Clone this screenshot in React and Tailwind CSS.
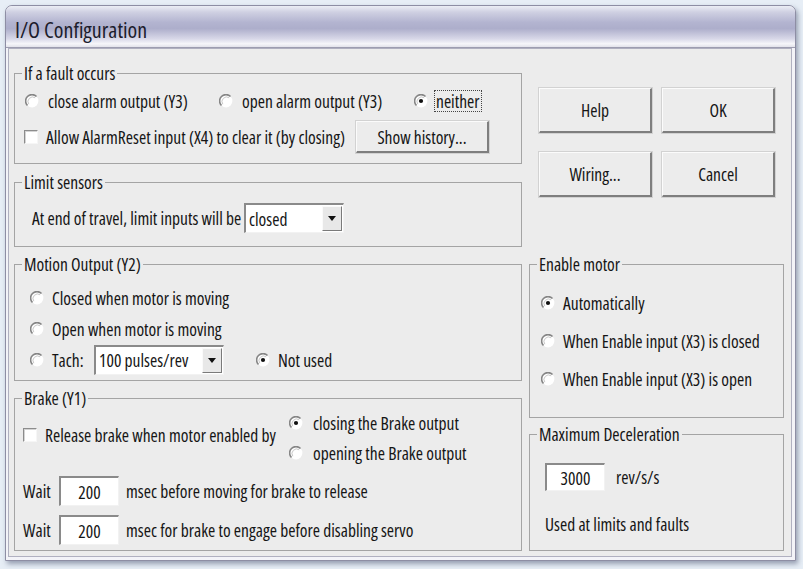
import React from "react";

function Radio({ checked, label, focus, gap = "gap-[9px]" }) {
  return (
    <div className={"flex items-center " + gap}>
      <svg width="14" height="14" viewBox="0 0 14 14" className="shrink-0">
        <circle cx="7" cy="7" r="6.4" fill="#ffffff" />
        <path d="M2.47 11.53 A6.4 6.4 0 0 1 11.53 2.47" stroke="#868686" strokeWidth="1.6" fill="none" />
        <path d="M3.8 10.2 A4.6 4.6 0 0 1 10.2 3.8" stroke="#c8c8c8" strokeWidth="1" fill="none" />
        {checked && <circle cx="7" cy="7" r="2.1" fill="#111111" />}
      </svg>
      {focus ? (
        <span className="border border-dotted border-[#444] px-[1px] leading-[20px]">{label}</span>
      ) : (
        <span className="leading-[20px] whitespace-nowrap">{label}</span>
      )}
    </div>
  );
}

function Check({ label }) {
  return (
    <div className="flex items-center gap-[8px]">
      <span className="w-[14px] h-[14px] shrink-0 bg-white border border-t-[#8c8c8c] border-l-[#8c8c8c] border-r-[#f6f6f6] border-b-[#f6f6f6] shadow-[inset_1px_1px_0_#d4d4d4]" />
      <span className="leading-[20px] whitespace-nowrap">{label}</span>
    </div>
  );
}

function Btn({ children, className = "" }) {
  return (
    <div
      className={
        "flex items-center justify-center bg-[#ececec] border-t border-l border-t-[#fbfbfb] border-l-[#fbfbfb] border-r-2 border-b-2 border-r-[#7e7e7e] border-b-[#7e7e7e] shadow-[0_0_0_1px_#d2d2d2] leading-[20px] " +
        className
      }
    >
      {children}
    </div>
  );
}

function Combo({ value, className = "" }) {
  return (
    <div
      className={
        "flex items-center bg-white border-t-2 border-l-2 border-t-[#8a8a8a] border-l-[#8a8a8a] border-b border-r border-b-[#f2f2f2] border-r-[#f2f2f2] " +
        className
      }
    >
      <span className="flex-1 pl-[3px] leading-[20px] whitespace-nowrap">{value}</span>
      <div className="w-[20px] h-[25px] mr-[1px] flex items-center justify-center bg-[#e8e8e8] border-t border-l border-t-[#fafafa] border-l-[#fafafa] border-r border-b border-r-[#7a7a7a] border-b-[#7a7a7a]">
        <svg width="8" height="5" viewBox="0 0 8 5">
          <path d="M0 0 H8 L4 5 Z" fill="#111" />
        </svg>
      </div>
    </div>
  );
}

function Field({ value, className = "" }) {
  return (
    <div
      className={
        "flex items-center justify-center bg-white border-t-2 border-l-2 border-t-[#8a8a8a] border-l-[#8a8a8a] border-b border-r border-b-[#f2f2f2] border-r-[#f2f2f2] leading-[20px] " +
        className
      }
    >
      {value}
    </div>
  );
}

function Group({ label, className = "", children }) {
  return (
    <fieldset className={"border border-[#a4a4a4] min-w-0 " + className}>
      <legend className="ml-[7px] px-[2px] leading-[20px]">{label}</legend>
      {children}
    </fieldset>
  );
}

export default function App() {
  return (
    <div className="w-[803px] h-[569px] overflow-hidden bg-[#e7eef6] pt-[5px] pl-[5px] font-['Open_Sans',sans-serif] font-stretch-[75%] font-[370] text-[17.5px] text-[#151515]">
      <div className="w-[791px] h-[556px] flex flex-col rounded-t-[7px] border border-[#8e8ea4] bg-[#f3f3f8] shadow-[2px_3px_5px_rgba(70,80,110,0.5)] overflow-hidden">
        <div className="h-[41px] shrink-0 pl-[9px] pt-[12px] rounded-t-[6px] bg-[linear-gradient(to_bottom,#eceef5_0%,#cfd0e2_15%,#b3b4d0_40%,#adaecb_55%,#d8d8e8_80%,#f6f6fa_92%,#e2e2ea_100%)]">
          <span className="text-[22px] leading-[22px] font-medium text-[#1c1c2c]">I/O Configuration</span>
        </div>
        <div className="h-px shrink-0 bg-[#9d9db0]" />
        <div className="ml-[2px] mr-[3px] mb-[3px] flex-1 bg-[#ececec] border border-[#b0b0c0] pt-[14px] pl-[5px] flex gap-[7px]">
          {/* Left column */}
          <div className="w-[508px] flex flex-col">
            <Group label="If a fault occurs" className="h-[101px]">
              <div className="pl-[10px] pt-[6px]">
                <div className="flex h-[24px] items-center">
                  <div className="w-[194px]">
                    <Radio label="close alarm output (Y3)" />
                  </div>
                  <div className="w-[195px]">
                    <Radio label="open alarm output (Y3)" />
                  </div>
                  <Radio checked focus label="neither" gap="gap-[6px]" />
                </div>
                <div className="flex items-center mt-[8px] h-[32px] -ml-px">
                  <div className="w-[332px]">
                    <Check label="Allow AlarmReset input (X4) to clear it (by closing)" />
                  </div>
                  <Btn className="w-[133px] h-[32px]">Show history...</Btn>
                </div>
              </div>
            </Group>
            <Group label="Limit sensors" className="h-[75px] mt-[8px]">
              <div className="pl-[17px] pt-[11px] flex items-center">
                <span className="w-[212px] leading-[20px] whitespace-nowrap">At end of travel, limit inputs will be</span>
                <Combo value="closed" className="w-[100px] h-[30px]" />
              </div>
            </Group>
            <Group label="Motion Output (Y2)" className="h-[127px] mt-[7px]">
              <div className="pl-[15px] pt-[8px]">
                <div className="h-[31px] flex items-center">
                  <Radio label="Closed when motor is moving" gap="gap-[8px]" />
                </div>
                <div className="h-[31px] flex items-center">
                  <Radio label="Open when motor is moving" gap="gap-[8px]" />
                </div>
                <div className="h-[31px] flex items-center">
                  <div className="w-[64px]">
                    <Radio label="Tach:" gap="gap-[8px]" />
                  </div>
                  <Combo value="100 pulses/rev" className="w-[130px] h-[30px]" />
                  <div className="ml-[32px]">
                    <Radio checked label="Not used" gap="gap-[8px]" />
                  </div>
                </div>
              </div>
            </Group>
            <Group label="Brake (Y1)" className="h-[163px] mt-[7px]">
              <div className="pl-[8px]">
                <div className="flex">
                  <div className="w-[266px] flex items-center pb-[6px]">
                    <Check label="Release brake when motor enabled by" />
                  </div>
                  <div className="flex flex-col">
                    <div className="h-[30px] flex items-center">
                      <Radio checked label="closing the Brake output" gap="gap-[10px]" />
                    </div>
                    <div className="h-[30px] flex items-center">
                      <Radio label="opening the Brake output" gap="gap-[10px]" />
                    </div>
                  </div>
                </div>
                <div className="flex items-center mt-[8px] h-[30px]">
                  <span className="w-[36px] leading-[20px]">Wait</span>
                  <Field value="200" className="w-[60px] h-[30px]" />
                  <span className="ml-[7px] leading-[20px]">msec before moving for brake to release</span>
                </div>
                <div className="flex items-center mt-[9px] h-[30px]">
                  <span className="w-[36px] leading-[20px]">Wait</span>
                  <Field value="200" className="w-[60px] h-[30px]" />
                  <span className="ml-[7px] leading-[20px]">msec for brake to engage before disabling servo</span>
                </div>
              </div>
            </Group>
          </div>
          {/* Right column */}
          <div className="w-[255px] flex flex-col">
            <div className="mt-[25px] pl-[10px] grid grid-cols-[113px_113px] gap-x-[10px] gap-y-[19px]">
              <Btn className="h-[45px]">Help</Btn>
              <Btn className="h-[45px]">OK</Btn>
              <Btn className="h-[45px]">Wiring...</Btn>
              <Btn className="h-[45px]">Cancel</Btn>
            </div>
            <Group label="Enable motor" className="h-[164px] mt-[57px]">
              <div className="pl-[11px] pt-[10px]">
                <div className="h-[38px] flex items-center">
                  <Radio checked label="Automatically" gap="gap-[8px]" />
                </div>
                <div className="h-[38px] flex items-center">
                  <Radio label="When Enable input (X3) is closed" gap="gap-[8px]" />
                </div>
                <div className="h-[38px] flex items-center">
                  <Radio label="When Enable input (X3) is open" gap="gap-[8px]" />
                </div>
              </div>
            </Group>
            <Group label="Maximum Deceleration" className="h-[127px] mt-[6px]">
              <div className="pl-[15px] pt-[19px]">
                <div className="flex items-center">
                  <Field value="3000" className="w-[60px] h-[28px]" />
                  <span className="ml-[11px] leading-[20px]">rev/s/s</span>
                </div>
                <div className="mt-[23px] leading-[20px]">Used at limits and faults</div>
              </div>
            </Group>
          </div>
        </div>
      </div>
    </div>
  );
}
